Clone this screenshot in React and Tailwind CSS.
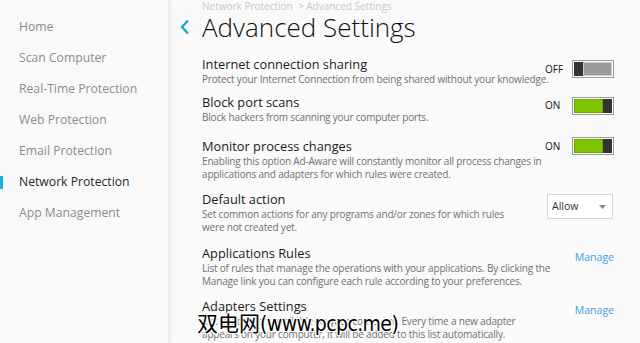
import React from "react";

const nav = [
  "Home",
  "Scan Computer",
  "Real-Time Protection",
  "Web Protection",
  "Email Protection",
  "Network Protection",
  "App Management",
];

function Toggle({ on }) {
  return (
    <div className="flex items-center gap-[7px]">
      <span className="w-[20px] text-[10px] text-[#111]">{on ? "ON" : "OFF"}</span>
      <div className="flex h-[18px] w-[42px] items-stretch border border-[#9a9a9a] bg-white p-[1px]">
        {on ? (
          <>
            <div className="flex-1 border border-[#6aa800] bg-[#7ec700]" />
            <div className="w-[9px] bg-[#333]" />
          </>
        ) : (
          <>
            <div className="w-[9px] bg-[#333]" />
            <div className="flex-1 border border-[#ccc] bg-[#9b9b9b]" />
          </>
        )}
      </div>
    </div>
  );
}

function Row({ title, desc, right, className, descW = "w-[350px]" }) {
  return (
    <div className={"flex items-start " + (className || "")}>
      <div className="min-w-0 flex-1">
        <div className="text-[12.8px] leading-[15px] text-[#1a1a1a]">{title}</div>
        <div className={"mt-[1px] text-[10px] leading-[12.5px] tracking-[-0.18px] text-[#707070] " + descW}>
          {desc}
        </div>
      </div>
      <div className="flex shrink-0 justify-end">{right}</div>
    </div>
  );
}

export default function App() {
  return (
    <div
      className="relative flex h-[343px] w-[640px] overflow-hidden bg-[#fafafa]"
      style={{ fontFamily: '"Open Sans", "Noto Sans", sans-serif' }}
    >
      <aside className="relative z-10 w-[168px] shrink-0 bg-[#f9f9f9] pt-[12px] shadow-[2px_0_4px_rgba(0,0,0,0.08)]">
        {nav.map((n) => (
          <div key={n} className="relative flex h-[31px] items-center pl-[19px]">
            {n === "Network Protection" && (
              <div className="absolute left-0 top-[9px] h-[13px] w-[3px] bg-[#19b1d4]" />
            )}
            <span
              className={
                "text-[12.2px] " + (n === "Network Protection" ? "text-[#2a2a2a]" : "text-[#8c8c8c]")
              }
            >
              {n}
            </span>
          </div>
        ))}
      </aside>
      <main className="min-w-0 flex-1 pl-[12px] pr-[26px]">
        <div className="pl-[22px] text-[10px] leading-[12px] text-[#c8c8c8]">
          Network Protection&nbsp;&nbsp;&gt; Advanced Settings
        </div>
        <div className="-mt-[1px] flex items-center">
          <svg width="22" height="18" viewBox="0 0 22 18">
            <path d="M8 2.5 L2 9 L8 15.5" fill="none" stroke="#1e9be6" strokeWidth="2.2" />
          </svg>
          <h1 className="text-[26px] font-light leading-[32px] text-[#111]">Advanced Settings</h1>
        </div>
        <div className="pl-[22px] pt-[14px]">
          <Row
            title="Internet connection sharing"
            desc="Protect your Internet Connection from being shared without your knowledge."
            right={<div className="mt-[3px]"><Toggle on={false} /></div>}
          />
          <Row
            className="mt-[9px]"
            title="Block port scans"
            desc="Block hackers from scanning your computer ports."
            right={<div className="mt-[2px]"><Toggle on /></div>}
          />
          <Row
            className="mt-[16px]"
            title="Monitor process changes"
            desc="Enabling this option Ad-Aware will constantly monitor all process changes in applications and adapters for which rules were created."
            right={<div className="-mt-[2px]"><Toggle on /></div>}
          />
          <Row
            className="mt-[12px]"
            title="Default action"
            descW="w-[318px]"
            desc="Set common actions for any programs and/or zones for which rules were not created yet."
            right={
              <div className="mt-[2px] mr-[1px] flex h-[25px] w-[66px] items-center justify-between border border-[#d6d6d6] bg-white pl-[4px] pr-[6px] text-[10.5px] text-[#333]">
                <span>Allow</span>
                <svg width="7" height="4" viewBox="0 0 7 4">
                  <path d="M0 0 L7 0 L3.5 4 Z" fill="#888" />
                </svg>
              </div>
            }
          />
          <Row
            className="mt-[13px]"
            title="Applications Rules"
            desc="List of rules that manage the operations with your applications. By clicking the Manage link you can configure each rule according to your preferences."
            right={<span className="mt-[4px] text-[10.5px] text-[#3d9fe3]">Manage</span>}
          />
          <Row
            className="mt-[12px]"
            title="Adapters Settings"
            desc="List of adapters available on your computer. Every time a new adapter appears on your computer, it will be added to this list automatically."
            right={<span className="mt-[4px] text-[10.5px] text-[#3d9fe3]">Manage</span>}
          />
        </div>
      </main>
      <div
        className="absolute left-[197px] top-[308px] flex items-baseline leading-[28px] text-black"
        style={{
          textShadow:
            "1px 0 #fff, -1px 0 #fff, 0 1px #fff, 0 -1px #fff, 1px 1px #fff, -1px -1px #fff, 1px -1px #fff, -1px 1px #fff",
        }}
      >
        <span className="text-[21px]" style={{ fontFamily: '"Noto Sans CJK SC", sans-serif' }}>
          双电网
        </span>
        <span
          className="text-[21px] tracking-[-0.6px]"
          style={{ fontFamily: '"DejaVu Sans Condensed", "Liberation Sans Narrow", "Noto Sans CJK SC", sans-serif' }}
        >
          (www.pcpc.me)
        </span>
      </div>
    </div>
  );
}
